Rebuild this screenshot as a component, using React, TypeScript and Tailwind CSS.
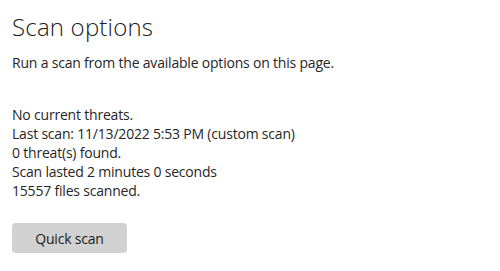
const details = [
  "Last scan: 11/13/2022 5:53 PM (custom scan)",
  "0 threat(s) found.",
  "Scan lasted 2 minutes 0 seconds",
  "15557 files scanned.",
];

export default function App() {
  return (
    <div
      className="w-[500px] h-[271px] bg-white px-3 pt-[11px] text-[#262626]"
      style={{ fontFamily: '"Open Sans", "Noto Sans", sans-serif' }}
    >
      <h1 className="text-[24px] leading-[32px] font-[350] tracking-[0.2px] text-[#1b1b1b]">Scan options</h1>
      <p className="mt-[10px] text-[14px] leading-[19px] tracking-[-0.2px]">
        Run a scan from the available options on this page.
      </p>

      <div className="mt-[33px] text-[14px] leading-[19px] tracking-[-0.2px]">
        <p>No current threats.</p>
        {details.map((line) => (
          <p key={line}>{line}</p>
        ))}
      </div>

      <button className="mt-[23px] w-[115px] h-[30px] rounded-[4px] bg-[#d1d1d1] text-[14px] tracking-[-0.2px] text-[#1b1b1b]">
        Quick scan
      </button>
    </div>
  );
}
